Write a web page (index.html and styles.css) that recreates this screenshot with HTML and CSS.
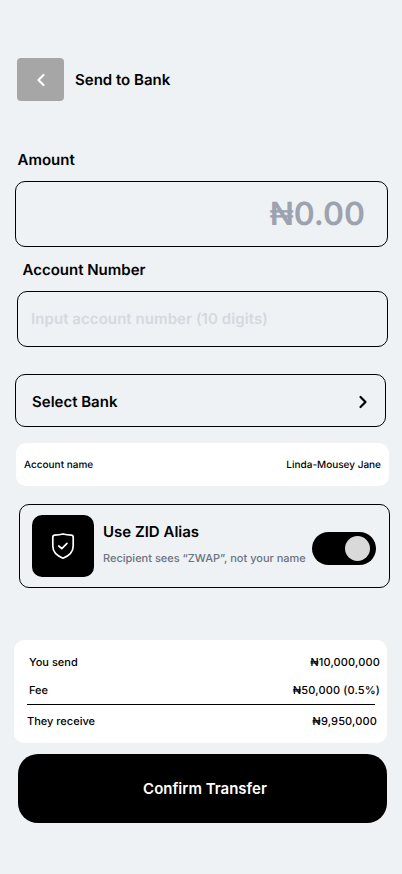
FILE: index.html
```html
<!DOCTYPE html>
<html lang="en">
<head>
    <meta charset="UTF-8">
    <title>Send to Bank</title>
    <link rel="stylesheet" href="styles.css">
</head>
<body>
    <div class="screen">
        <header class="top-bar">
            <button class="back-btn" type="button" aria-label="Back">
                <svg width="12" height="16" viewBox="0 0 12 16" fill="none"><path d="M8.5 3 L3.5 8 L8.5 13" stroke="#fff" stroke-width="2.2" stroke-linecap="round" stroke-linejoin="round"/></svg>
            </button>
            <h1>Send to Bank</h1>
        </header>

        <p class="field-label amount-label">Amount</p>
        <div class="amount-field">₦0.00</div>

        <p class="field-label account-label">Account Number</p>
        <div class="account-field">Input account number (10 digits)</div>

        <div class="bank-select">
            <span>Select Bank</span>
            <svg class="chevron" width="12" height="16" viewBox="0 0 12 16" fill="none"><path d="M3.5 3 L8.5 8 L3.5 13" stroke="#000" stroke-width="2.2" stroke-linecap="round" stroke-linejoin="round"/></svg>
        </div>

        <div class="name-card">
            <span>Account name</span>
            <span>Linda-Mousey Jane</span>
        </div>

        <div class="alias-card">
            <div class="alias-icon">
                <svg width="26" height="28" viewBox="0 0 26 28" fill="none">
                    <path d="M4.8 3.2 C8 3.1 10.5 2.7 13 2 C15.5 2.7 18 3.1 21.2 3.2 Q23.2 3.3 23.2 5.4 V14 C23.2 19.5 19 23.8 13 26.2 C7 23.8 2.8 19.5 2.8 14 V5.4 Q2.8 3.3 4.8 3.2 Z" stroke="#fff" stroke-width="1.7" stroke-linejoin="round"/>
                    <path d="M8.8 14 L11.8 16.6 L17 11.4" stroke="#fff" stroke-width="1.7" stroke-linecap="round" stroke-linejoin="round"/>
                </svg>
            </div>
            <div class="alias-text">
                <h2>Use ZID Alias</h2>
                <p>Recipient sees “ZWAP”, not your name</p>
            </div>
            <div class="toggle"><span class="knob"></span></div>
        </div>

        <div class="summary-card">
            <div class="row row-send"><span>You send</span><span>₦10,000,000</span></div>
            <div class="row row-fee"><span>Fee</span><span>₦50,000 (0.5%)</span></div>
            <div class="divider"></div>
            <div class="row row-receive"><span>They receive</span><span>₦9,950,000</span></div>
        </div>

        <button class="confirm-btn" type="button">Confirm Transfer</button>
    </div>
</body>
</html>
```

FILE: styles.css
```css
* {
    box-sizing: border-box;
}

body {
    margin: 0;
    background: #eef2f5;
    font-family: Inter, 'Liberation Sans', Arial, sans-serif;
    text-rendering: geometricPrecision;
    color: #000;
}

.screen {
    width: 402px;
    height: 874px;
    padding-top: 58px;
    overflow: hidden;
}

.top-bar {
    display: flex;
    align-items: center;
    gap: 11px;
    margin-left: 17px;
}

.back-btn {
    width: 47px;
    height: 43px;
    border: none;
    border-radius: 4px;
    background: #a6a6a6;
    display: flex;
    align-items: center;
    justify-content: center;
    padding: 0;
}

.top-bar h1 {
    margin: -1px 0 0;
    font-size: 15px;
    font-weight: 600;
}

.field-label {
    margin: 0;
    font-size: 15px;
    line-height: 18px;
    font-weight: 600;
}

.amount-label {
    margin: 50px 0 0 17.5px;
}

.amount-field {
    width: 373px;
    height: 66px;
    margin: 12px 0 0 15px;
    padding: 0 22px 2px 0;
    border: 1px solid #000;
    border-radius: 10px;
    display: flex;
    align-items: center;
    justify-content: flex-end;
    font-size: 31.8px;
    font-weight: 600;
    color: #9ca3af;
}

.account-label {
    margin: 14px 0 0 22.5px;
}

.account-field {
    width: 371px;
    height: 56px;
    margin: 12px 0 0 17px;
    padding: 0 0 2px 13px;
    border: 1px solid #000;
    border-radius: 10px;
    display: flex;
    align-items: center;
    font-size: 15px;
    font-weight: 600;
    letter-spacing: 0.07px;
    color: #d5d9df;
}

.bank-select {
    width: 371px;
    height: 53px;
    margin: 27px 0 0 15px;
    padding: 1px 16px 0 16px;
    border: 1px solid #000;
    border-radius: 10px;
    display: flex;
    align-items: center;
    justify-content: space-between;
    font-size: 15px;
    font-weight: 600;
}

.chevron {
    margin-top: 2px;
}

.name-card {
    width: 373px;
    height: 43px;
    margin: 16px 0 0 16px;
    padding: 0 8px;
    background: #fff;
    border-radius: 10px;
    display: flex;
    align-items: center;
    justify-content: space-between;
    font-size: 10px;
    font-weight: 500;
}

.alias-card {
    width: 371px;
    height: 84px;
    margin: 18px 0 0 19px;
    padding-left: 12px;
    border: 1px solid #000;
    border-radius: 10px;
    display: flex;
    align-items: center;
}

.alias-icon {
    width: 62px;
    height: 62px;
    flex: none;
    border-radius: 10px;
    background: #000;
    display: flex;
    align-items: center;
    justify-content: center;
}

.alias-text {
    margin: -5px 0 0 9px;
    width: 209px;
    flex: none;
}

.alias-text h2 {
    margin: 0;
    font-size: 15px;
    line-height: 18px;
    font-weight: 600;
}

.alias-text p {
    margin: 11px 0 0;
    font-size: 11px;
    line-height: 13px;
    font-weight: 500;
    color: #6b7280;
    white-space: nowrap;
}

.toggle {
    width: 64px;
    height: 33px;
    flex: none;
    margin-top: 4px;
    padding-right: 6px;
    border-radius: 17px;
    background: #000;
    display: flex;
    align-items: center;
    justify-content: flex-end;
}

.knob {
    width: 25px;
    height: 25px;
    border-radius: 50%;
    background: #d9d9d9;
}

.summary-card {
    width: 373px;
    height: 103px;
    margin: 52px 0 0 14px;
    padding-top: 15px;
    background: #fff;
    border-radius: 10px;
    font-size: 11px;
    font-weight: 500;
}

.row {
    display: flex;
    justify-content: space-between;
    line-height: 14px;
}

.row span:last-child {
    letter-spacing: 0.15px;
}

.row-send,
.row-fee {
    padding: 0 7px 0 15px;
}

.row-fee {
    margin-top: 14px;
}

.divider {
    height: 1px;
    margin: 7px 12px 0 13px;
    background: #000;
}

.row-receive {
    margin-top: 9px;
    padding: 0 10px 0 13px;
}

.confirm-btn {
    display: block;
    width: 369px;
    height: 69px;
    margin: 11px 0 0 18px;
    padding: 0 0 1px 5px;
    border: none;
    border-radius: 20px;
    background: #000;
    color: #fff;
    font-family: inherit;
    font-size: 15px;
    font-weight: 600;
}
```
